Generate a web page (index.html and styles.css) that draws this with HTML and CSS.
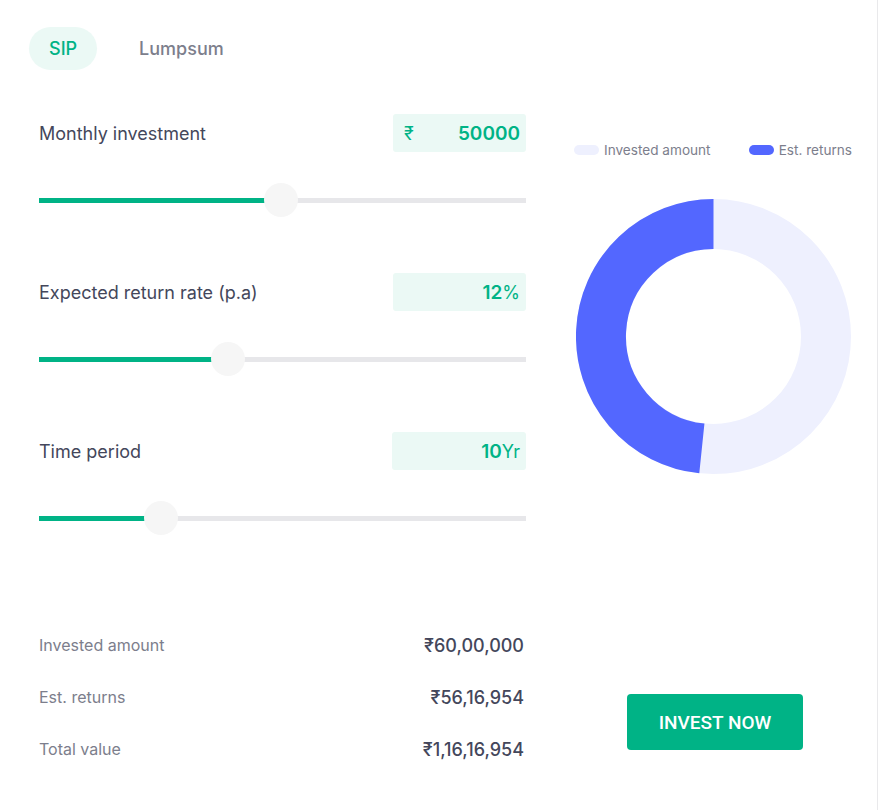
FILE: index.html
```html
<!DOCTYPE html>
<html lang="en">
<head>
<meta charset="utf-8">
<title>SIP Calculator</title>
<link rel="stylesheet" href="styles.css">
</head>
<body>
<div class="card">
  <div class="tabs">
    <div class="tab tab-active">SIP</div>
    <div class="tab">Lumpsum</div>
  </div>
  <div class="main">
    <div class="left">
      <div class="field">
        <div class="field-head">
          <div class="field-label">Monthly investment</div>
          <div class="field-box box-rupee"><span class="box-prefix">₹</span><span class="box-value">50000</span></div>
        </div>
        <div class="slider" style="--p:0.4975">
          <div class="slider-track"></div>
          <div class="slider-fill"></div>
          <div class="slider-thumb"></div>
        </div>
      </div>
      <div class="field">
        <div class="field-head">
          <div class="field-label">Expected return rate (p.a)</div>
          <div class="field-box"><span class="box-value">12</span><span class="box-suffix">%</span></div>
        </div>
        <div class="slider" style="--p:0.379">
          <div class="slider-track"></div>
          <div class="slider-fill"></div>
          <div class="slider-thumb"></div>
        </div>
      </div>
      <div class="field">
        <div class="field-head">
          <div class="field-label">Time period</div>
          <div class="field-box box-wide"><span class="box-value">10</span><span class="box-suffix">Yr</span></div>
        </div>
        <div class="slider" style="--p:0.2308">
          <div class="slider-track"></div>
          <div class="slider-fill"></div>
          <div class="slider-thumb"></div>
        </div>
      </div>
      <div class="results">
        <div class="result-row"><span class="result-label">Invested amount</span><span class="result-value">₹60,00,000</span></div>
        <div class="result-row"><span class="result-label">Est. returns</span><span class="result-value">₹56,16,954</span></div>
        <div class="result-row"><span class="result-label">Total value</span><span class="result-value">₹1,16,16,954</span></div>
      </div>
    </div>
    <div class="right">
      <div class="legend">
        <div class="legend-item"><span class="swatch swatch-light"></span>Invested amount</div>
        <div class="legend-item"><span class="swatch swatch-blue"></span>Est. returns</div>
      </div>
      <svg class="donut" width="275" height="275" viewBox="0 0 275 275">
        <circle cx="137.5" cy="137.5" r="112.5" fill="none" stroke="#eef0fe" stroke-width="50"/>
        <path d="M137.5 25 A112.5 112.5 0 0 0 125.86 249.4" fill="none" stroke="#5367ff" stroke-width="50"/>
      </svg>
      <button class="invest-btn">INVEST NOW</button>
    </div>
  </div>
</div>
</body>
</html>
```

FILE: styles.css
```css
* { box-sizing: border-box; }
html, body { margin: 0; padding: 0; background: #ffffff; }
body { font-family: "Inter", "Noto Sans", sans-serif; color: #44475b; }

.card {
  width: 878px;
  height: 810px;
  border-right: 1px solid #e9e9eb;
  padding: 27px 0 0 29px;
}

.tabs { display: flex; gap: 22px; height: 43px; }
.tab {
  height: 43px;
  padding: 0 20px;
  border-radius: 22px;
  display: flex;
  align-items: center;
  font-size: 18px;
  font-weight: 500;
  color: #7c7e8c;
}
.tab-active { background: #ebf9f5; color: #00b386; }

.main {
  display: grid;
  grid-template-columns: 487px 278px;
  column-gap: 48px;
  margin-top: 44px;
  padding-left: 10px;
}

.field + .field { margin-top: 56px; }
.field-head {
  display: flex;
  justify-content: space-between;
  align-items: center;
  height: 38px;
}
.field-label { font-size: 18px; color: #44475b; }
.field-box {
  width: 133px;
  height: 38px;
  background: #ebf9f5;
  border-radius: 3px;
  display: flex;
  align-items: center;
  justify-content: flex-end;
  padding: 0 6px 0 11px;
  color: #00b386;
}
.box-wide { width: 134px; }
.box-rupee { justify-content: space-between; }
.box-prefix { font-size: 18px; }
.box-value { font-size: 19px; font-weight: 600; }
.box-suffix { font-size: 18px; font-weight: 400; }

.slider { position: relative; height: 34px; margin-top: 31px; }
.slider-track {
  position: absolute;
  left: 0; right: 0; top: 15px;
  height: 5px;
  background: #e7e7ea;
}
.slider-fill {
  position: absolute;
  left: 0; top: 15px;
  height: 5px;
  width: calc(var(--p) * (100% - 34px) + 17px);
  background: #00b386;
}
.slider-thumb {
  position: absolute;
  top: 0;
  left: calc(var(--p) * (100% - 34px));
  width: 34px;
  height: 34px;
  border-radius: 50%;
  background: #f6f6f6;
}

.results { margin-top: 84px; }
.result-row {
  height: 52px;
  display: flex;
  justify-content: space-between;
  align-items: center;
  padding-right: 2px;
}
.result-label { font-size: 16px; color: #7c7e8c; }
.result-value { font-size: 18px; font-weight: 500; color: #44475b; }

.right {
  display: flex;
  flex-direction: column;
  align-items: center;
  padding-top: 27px;
}
.legend {
  display: flex;
  justify-content: space-between;
  width: 100%;
  height: 18px;
  font-size: 13.6px;
  color: #7c7e8c;
}
.legend-item { display: flex; align-items: center; gap: 5px; }
.swatch { width: 25px; height: 10px; border-radius: 5px; display: inline-block; }
.swatch-light { background: #eef0fe; }
.swatch-blue { background: #5367ff; }

.donut { display: block; margin-top: 40px; }

.invest-btn {
  margin-top: 220px;
  margin-left: 4px;
  width: 176px;
  height: 56px;
  border: 0;
  border-radius: 4px;
  background: #00b386;
  color: #ffffff;
  font-family: "Roboto", "Liberation Sans", sans-serif;
  font-size: 19px;
  font-weight: 500;
  cursor: pointer;
}
```
